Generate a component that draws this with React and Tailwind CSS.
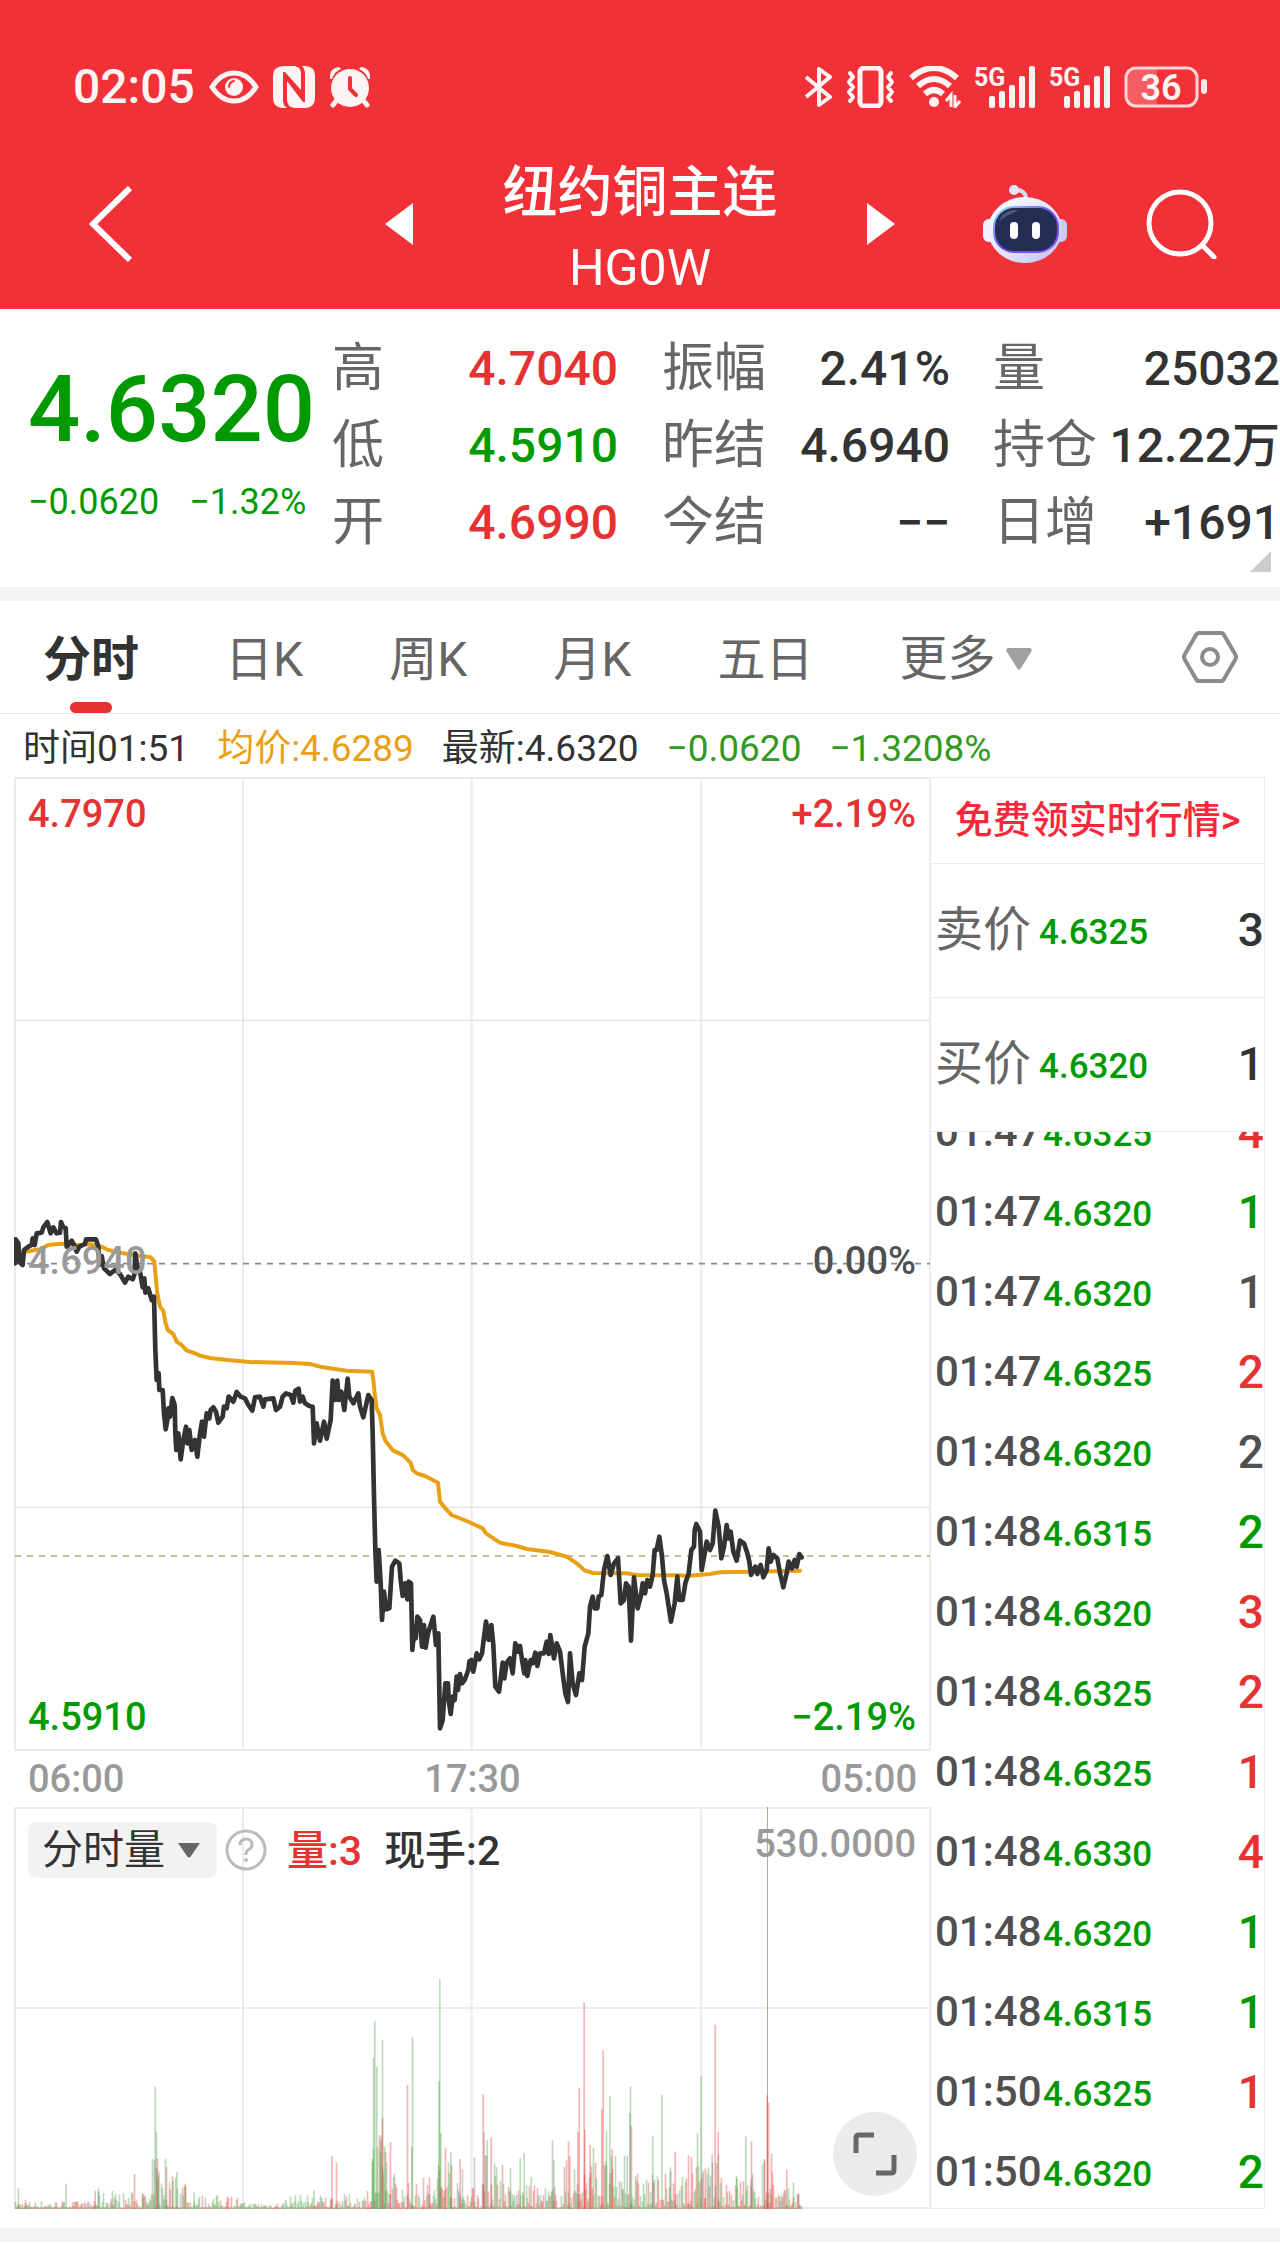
import { useState } from 'react';

const stats = [
  ['高', '4.7040', 'text-[#e63232]', '振幅', '2.41%', '量', '25032'],
  ['低', '4.5910', 'text-[#009a00]', '昨结', '4.6940', '持仓', '12.22万'],
  ['开', '4.6990', 'text-[#e63232]', '今结', '−−', '日增', '+1691'],
];

const tabs = ['分时', '日K', '周K', '月K', '五日'];

const ticks = [
  ['01:47', '4.6325', 4, 'text-[#e63232]'],
  ['01:47', '4.6320', 1, 'text-[#009a00]'],
  ['01:47', '4.6320', 1, 'text-[#505050]'],
  ['01:47', '4.6325', 2, 'text-[#e63232]'],
  ['01:48', '4.6320', 2, 'text-[#505050]'],
  ['01:48', '4.6315', 2, 'text-[#009a00]'],
  ['01:48', '4.6320', 3, 'text-[#e63232]'],
  ['01:48', '4.6325', 2, 'text-[#e63232]'],
  ['01:48', '4.6325', 1, 'text-[#e63232]'],
  ['01:48', '4.6330', 4, 'text-[#e63232]'],
  ['01:48', '4.6320', 1, 'text-[#009a00]'],
  ['01:48', '4.6315', 1, 'text-[#009a00]'],
  ['01:50', '4.6325', 1, 'text-[#e63232]'],
  ['01:50', '4.6320', 2, 'text-[#009a00]'],
];

const pricePoints =
  '45,190 47,118 55,130 58,185 68,195 72,150 85,140 95,135 98,115 104,135 110,100 125,98 130,82 142,66 152,100 160,82 170,100 180,98 183,66 190,82 197,84 200,140 215,122 225,140 230,155 238,140 255,132 258,118 288,118 295,140 298,195 305,168 312,205 330,222 345,210 360,222 375,248 385,230 398,238 403,225 406,160 412,200 420,215 428,262 433,235 436,278 445,265 455,300 462,290 466,450 470,540 476,520 478,570 488,570 492,640 497,688 503,655 505,625 510,650 517,594 524,615 526,700 529,750 535,700 542,778 550,720 558,680 562,730 568,690 575,750 585,720 592,770 600,700 606,665 612,710 620,640 628,655 632,630 640,622 648,635 655,668 668,650 672,620 680,625 686,590 700,605 710,576 722,590 735,595 745,615 757,632 765,592 780,590 790,620 795,598 820,595 828,630 840,620 848,590 858,580 872,585 880,608 886,572 896,566 900,605 908,590 915,610 928,618 938,620 942,730 950,670 960,722 972,665 980,716 992,660 998,542 1005,600 1012,542 1016,600 1024,575 1033,630 1043,536 1048,590 1060,610 1070,590 1075,580 1080,620 1090,652 1105,585 1115,600 ' +
  '1118,700 1122,890 1126,1050 1130,1145 1136,1050 1142,1150 1146,1260 1152,1175 1158,1228 1168,1225 1176,1100 1186,1082 1198,1090 1202,1140 1208,1188 1216,1150 1222,1198 1226,1145 1233,1150 1237,1350 1244,1280 1247,1315 1252,1250 1260,1260 1266,1340 1272,1275 1277,1343 1284,1300 1292,1275 1300,1250 1308,1335 1315,1300 1320,1585 1328,1560 1336,1450 1344,1450 1346,1500 1352,1542 1358,1490 1364,1500 1370,1430 1374,1470 1380,1422 1386,1450 1394,1440 1405,1410 1408,1385 1414,1380 1420,1415 1430,1360 1438,1378 1446,1360 1458,1265 1466,1320 1474,1275 1480,1335 1486,1460 1497,1475 1503,1430 1508,1388 1513,1435 1520,1388 1530,1375 1538,1420 1546,1330 1554,1355 1560,1338 1566,1380 1573,1420 1576,1380 1582,1428 1592,1380 1598,1390 1606,1358 1612,1398 1620,1360 1632,1360 1640,1325 1646,1362 1651,1305 1662,1375 1670,1330 1680,1355 1690,1435 1696,1480 1704,1506 1710,1360 1718,1450 1728,1485 1738,1420 1746,1440 1754,1340 1765,1300 1770,1220 1778,1190 1784,1225 1792,1225 1796,1190 1804,1185 1812,1110 1822,1068 1832,1125 1842,1090 1854,1075 1862,1210 1872,1200 1878,1150 1886,1160 1893,1322 1902,1132 1913,1225 1922,1190 1928,1150 1935,1180 1942,1140 1950,1160 1958,1125 1964,1050 1970,1050 1978,1010 1986,1070 1992,1140 2000,1180 2013,1265 2024,1210 2032,1130 2038,1200 2048,1200 2056,1150 2066,1120 2074,1050 2082,1040 2084,990 2089,972 2100,995 2105,1110 2114,1060 2120,1025 2130,1050 2138,1030 2146,932 2156,980 2164,1075 2172,1040 2180,975 2186,1015 2192,995 2200,1055 2210,1082 2220,1022 2232,1030 2242,1060 2248,1085 2253,1125 2266,1100 2272,1122 2282,1095 2290,1132 2300,1110 2306,1045 2312,1085 2320,1065 2332,1075 2340,1120 2350,1162 2360,1120 2366,1085 2376,1105 2384,1080 2390,1100 2398,1062 2405,1072';

const averagePoints =
  '45,170 60,158 90,153 120,148 145,135 185,131 225,136 270,133 300,138 325,150 370,160 420,168 452,172 463,185 468,240 472,280 480,320 490,332 497,370 503,390 520,402 530,425 545,435 560,452 580,458 600,467 630,474 690,481 750,486 880,489 930,492 960,500 1040,512 1116,515 1120,540 1124,580 1130,625 1140,645 1148,700 1156,722 1166,735 1180,752 1210,766 1222,778 1233,790 1238,810 1250,820 1275,828 1314,848 1320,905 1336,925 1355,945 1400,963 1420,972 1448,985 1458,1000 1480,1015 1500,1028 1550,1038 1580,1047 1650,1056 1700,1070 1730,1090 1755,1112 1780,1119 1880,1120 1910,1125 2040,1126 2060,1128 2130,1122 2160,1117 2405,1112';

const RED = '#e63232';
const GREEN = '#3f9f3f';
const GRAY = '#777777';

// x, height, colour of the tallest bars
const spikes = [
  [55, 62, GREEN], [76, 28, RED], [198, 76, GREEN], [285, 55, RED], [295, 62, GREEN], [337, 54, GREEN],
  [403, 105, RED], [428, 46, GREEN], [465, 367, GREEN], [469, 232, GREEN], [472, 152, RED], [476, 112, GREEN],
  [496, 150, GREEN], [499, 127, RED], [518, 84, GREEN], [530, 112, GREEN], [556, 74, RED], [582, 50, GREEN],
  [682, 38, RED], [942, 56, GREEN], [995, 159, RED], [1009, 140, RED], [1102, 54, RED],
  [1117, 150, GREEN], [1120, 453, GREEN], [1124, 565, GREEN], [1130, 428, GREEN], [1141, 172, GREEN],
  [1147, 508, GREEN], [1147, 272, RED], [1153, 188, GREEN], [1156, 172, RED], [1171, 201, RED],
  [1222, 372, RED], [1237, 516, GREEN], [1235, 186, GREEN], [1270, 94, RED], [1288, 94, RED],
  [1316, 384, GREEN], [1319, 690, GREEN], [1322, 228, GREEN], [1336, 184, RED], [1352, 170, GREEN], [1354, 132, RED],
  [1380, 150, RED], [1387, 119, GRAY], [1423, 155, GRAY],
  [1449, 344, RED], [1452, 230, GRAY], [1461, 206, GREEN], [1473, 214, RED], [1483, 136, GREEN], [1531, 122, GREEN],
  [1560, 152, GREEN], [1572, 168, GREEN], [1593, 96, GREEN], [1657, 206, GRAY], [1661, 148, GREEN],
  [1705, 203, RED], [1709, 158, RED], [1733, 230, RED], [1737, 362, RED], [1752, 620, RED], [1754, 238, RED],
  [1770, 192, RED], [1780, 184, GREEN], [1805, 300, RED], [1809, 476, RED], [1819, 233, GREEN], [1829, 338, GREEN],
  [1836, 179, RED], [1873, 160, GREEN], [1881, 160, GRAY], [1889, 288, GREEN], [1891, 368, GREEN], [1894, 249, RED],
  [1958, 218, GREEN], [1985, 342, GREEN], [2011, 125, GREEN], [2025, 172, RED], [2065, 161, RED], [2074, 156, RED],
  [2092, 227, GREEN], [2103, 398, GREEN], [2116, 122, RED], [2136, 164, GRAY], [2145, 553, RED], [2154, 232, RED],
  [2155, 164, GREEN], [2210, 92, GREEN], [2237, 218, GREEN], [2254, 203, RED], [2293, 150, RED],
  [2301, 341, RED], [2305, 320, RED], [2314, 166, RED], [2360, 118, RED], [2380, 80, GREEN], [2395, 44, RED],
];

// upper limit of the ordinary bars up to each x
const ranges = [
  [280, 22], [455, 50], [480, 150], [560, 110], [720, 40], [850, 18], [1112, 42], [1160, 230], [1200, 120],
  [1310, 80], [1360, 180], [1445, 80], [1510, 170], [1630, 70], [1690, 70], [1780, 150], [1860, 160],
  [2080, 110], [2180, 140], [2280, 110], [2320, 170], [2405, 60],
];

const makeBars = () => {
  const bars = [];
  let seed = 7;
  const random = () => {
    seed = (seed * 16807) % 2147483647;
    return seed / 2147483647;
  };
  for (let x = 46; x < 2405; x += 3) {
    const limit = ranges.find(([end]) => x <= end)[1];
    const pick = random();
    const color = pick < 0.45 ? RED : pick < 0.88 ? GREEN : GRAY;
    bars.push([x, 3 + limit * Math.pow(random(), 1.8), color]);
  }
  return bars;
};

const volumeBars = [...makeBars(), ...spikes];

const SignalIcon = () => (
  <svg className="w-[62px] h-[42px] overflow-visible" viewBox="0 0 62 42" fill="#fff4f4">
    <text x="0" y="20" fontSize="25" fontWeight="700" fontFamily="Roboto, sans-serif">5G</text>
    <rect x="15" y="30" width="6" height="12" rx="2" />
    <rect x="25" y="25" width="6" height="17" rx="2" />
    <rect x="35" y="19" width="6" height="23" rx="2" />
    <rect x="45" y="10" width="6" height="32" rx="2" />
    <rect x="55" y="0" width="6" height="42" rx="2" />
  </svg>
);

const StatusBar = () => (
  <div className="flex items-center justify-between pl-[73px] pr-[72px] h-[60px] text-[#fff4f4]">
    <div className="flex items-center gap-[14px]">
      <span className="text-[48px] leading-[60px] font-medium">02:05</span>
      <svg className="w-[50px] h-[34px]" viewBox="0 0 50 34" fill="none" stroke="currentColor" strokeWidth="5">
        <path d="M3 17Q12 3 25 3T47 17Q38 31 25 31T3 17Z" />
        <circle cx="25" cy="17" r="9" fill="currentColor" stroke="none" />
        <path d="M20 17Q20 12 25 11" stroke="#f23038" strokeWidth="2" strokeLinecap="round" />
      </svg>
      <svg className="w-[42px] h-[42px]" viewBox="0 0 42 42" fill="currentColor">
        <path d="M10 0H22Q28 1 28 8V24L12 6H10V34Q10 40 14 42H9Q0 41 0 32V9Q0 1 10 0Z" />
        <path d="M29 0H33Q42 1 42 9V32Q42 41 33 42H22Q14 41 14 34V15L30 36H32V8Q32 3 29 0Z" />
      </svg>
      <svg className="w-[42px] h-[42px]" viewBox="0 0 42 42" fill="currentColor">
        <circle cx="21" cy="22" r="19" />
        <path d="M1 13Q0 2 10 1L12 3Q5 6 3 13ZM41 13Q42 2 32 1L30 3Q37 6 39 13Z" />
        <path d="M8 34L4 39M34 34L38 39" stroke="currentColor" strokeWidth="5" strokeLinecap="round" />
        <path d="M21 12V23L27 29" fill="none" stroke="#f23038" strokeWidth="4" strokeLinecap="round" />
      </svg>
    </div>
    <div className="flex items-center gap-[13px]">
      <svg className="w-[28px] h-[42px]" viewBox="0 0 28 42" fill="none" stroke="currentColor" strokeWidth="4" strokeLinejoin="round">
        <path d="M1 11L25 31L14 39V3L25 11L1 31" />
      </svg>
      <svg className="w-[50px] h-[42px]" viewBox="0 0 50 42" fill="none" stroke="currentColor" strokeWidth="4" strokeLinejoin="round" strokeLinecap="round">
        <rect x="14" y="2" width="21" height="38" rx="4" strokeWidth="5" />
        <path d="M4 7L7 11L3 16L7 21L3 26L7 31L4 35M45 7L42 11L46 16L42 21L46 26L42 31L45 35" />
      </svg>
      <svg className="w-[52px] h-[42px]" viewBox="0 0 52 42" fill="none" stroke="currentColor" strokeWidth="6">
        <path d="M2 12Q25 -8 48 12M9 20Q25 6 41 20M16 28Q25 20 34 28" />
        <circle cx="25" cy="36" r="5" fill="currentColor" stroke="none" />
        <path d="M42 41V29L37 35M46 29V41L51 35" strokeWidth="3" />
      </svg>
      <SignalIcon />
      <SignalIcon />
      <svg className="w-[84px] h-[42px]" viewBox="0 0 84 42">
        <path d="M10 2H33V40H10Q2 40 2 32V10Q2 2 10 2Z" fill="#fff" fillOpacity="0.22" />
        <rect x="2" y="2" width="71" height="38" rx="10" fill="none" stroke="#ffd6d8" strokeWidth="3" />
        <rect x="77" y="13" width="6" height="15" rx="3" fill="#ffe8e8" />
        <text x="37" y="34" fontSize="36" fontWeight="600" textAnchor="middle" fontFamily="Roboto, sans-serif" fill="#fff4f4">36</text>
      </svg>
    </div>
  </div>
);

const RobotIcon = () => (
  <svg className="w-[84px] h-[78px]" viewBox="0 0 84 78">
    <defs>
      <linearGradient id="head" x1="0" y1="0" x2="1" y2="1">
        <stop offset="0" stopColor="#ffffff" />
        <stop offset="0.55" stopColor="#e2e3fb" />
        <stop offset="1" stopColor="#b9bdf0" />
      </linearGradient>
      <linearGradient id="rim" x1="0" y1="0" x2="1" y2="1">
        <stop offset="0" stopColor="#8fe6ff" />
        <stop offset="0.5" stopColor="#6d4df0" />
        <stop offset="1" stopColor="#8a4df5" />
      </linearGradient>
    </defs>
    <path d="M31 5Q42 4 43 13" fill="none" stroke="#dcdcf6" strokeWidth="4" />
    <circle cx="31" cy="5" r="5" fill="#e6e6fb" />
    <rect x="0" y="34" width="14" height="23" rx="6" fill="#f0f0ff" />
    <rect x="70" y="34" width="14" height="23" rx="6" fill="#c9cbf5" />
    <ellipse cx="42" cy="45" rx="37" ry="33" fill="url(#head)" />
    <rect x="11" y="22" width="64" height="45" rx="20" fill="#242e55" stroke="url(#rim)" strokeWidth="2" />
    <path d="M16 36Q20 24 36 25Q26 29 16 36Z" fill="#4c5778" />
    <rect x="27" y="37" width="8" height="17" rx="4" fill="#fff" />
    <rect x="49" y="37" width="8" height="17" rx="4" fill="#fff" />
  </svg>
);

const NavBar = () => (
  <div className="grid grid-cols-[1fr_510px_1fr] items-center content-center h-[139px] text-white">
    <div className="flex pl-[89px]">
      <button aria-label="返回">
        <svg className="w-[44px] h-[76px]" viewBox="0 0 44 76" fill="none" stroke="currentColor" strokeWidth="6">
          <path d="M41 2L4 38L41 74" />
        </svg>
      </button>
    </div>
    <div className="flex items-center justify-between">
      <button aria-label="上一个">
        <svg className="w-[28px] h-[42px]" viewBox="0 0 28 42" fill="currentColor">
          <path d="M28 0V42L0 21Z" />
        </svg>
      </button>
      <h1 className="flex flex-col items-center pt-[12px]">
        <span className="text-[55px] leading-[78px] font-medium">纽约铜主连</span>
        <span className="text-[50px] leading-[75px]">HG0W</span>
      </h1>
      <button aria-label="下一个">
        <svg className="w-[28px] h-[42px]" viewBox="0 0 28 42" fill="currentColor">
          <path d="M0 0V42L28 21Z" />
        </svg>
      </button>
    </div>
    <div className="flex items-center justify-end gap-[79px] pr-[62px]">
      <button aria-label="智能助手">
        <RobotIcon />
      </button>
      <button aria-label="搜索">
        <svg className="w-[72px] h-[70px]" viewBox="0 0 72 70" fill="none" stroke="currentColor" strokeWidth="5">
          <circle cx="34" cy="34" r="31" />
          <path d="M57 57L68 68" strokeLinecap="round" />
        </svg>
      </button>
    </div>
  </div>
);

const Quote = () => (
  <section className="relative flex h-[278px] pt-[21px]">
    <div className="w-[332px] pl-[28px] shrink-0">
      <p className="text-[92px] leading-[112px] pt-[24px] font-medium text-[#009a00]">4.6320</p>
      <p className="flex gap-[30px] text-[36px] leading-[44px] pt-[14px] text-[#009a00]">
        <span>−0.0620</span>
        <span>−1.32%</span>
      </p>
    </div>
    <dl className="flex-1 grid grid-cols-[286px_44px_288px_43px_1fr] content-start text-[48px] leading-[77px] text-[#333333]">
      {stats.map(([a, high, color, b, mid, c, last]) => (
        <div key={a} className="contents">
          <div className="flex justify-between h-[77px]">
            <dt className="text-[52px] text-[#666666]">{a}</dt>
            <dd className={`font-medium ${color}`}>{high}</dd>
          </div>
          <span />
          <div className="flex justify-between h-[77px]">
            <dt className="text-[52px] text-[#666666]">{b}</dt>
            <dd className="font-medium">{mid}</dd>
          </div>
          <span />
          <div className="flex justify-between h-[77px]">
            <dt className="text-[52px] text-[#666666]">{c}</dt>
            <dd className="font-medium whitespace-nowrap">{last}</dd>
          </div>
        </div>
      ))}
    </dl>
    <svg className="absolute right-[9px] bottom-[15px] w-[21px] h-[21px]" viewBox="0 0 21 21" fill="#cccccc">
      <path d="M21 0V21H0Z" />
    </svg>
  </section>
);

const TabBar = ({ active, onChange }) => (
  <nav className="flex items-stretch h-[113px] pl-[43px] pr-[42px] border-b border-[#e6e6e6] text-[48px] text-[#666666]">
    <div className="flex gap-[86px]">
      {tabs.map((tab) => (
        <button
          key={tab}
          onClick={() => onChange(tab)}
          className={`flex flex-col items-center justify-between ${active === tab ? 'font-bold text-[#333333]' : ''}`}
        >
          <span className="leading-[70px] pt-[24px]">{tab}</span>
          {active === tab && <span className="w-[42px] h-[11px] rounded-full bg-[#e63232]" />}
        </button>
      ))}
      <button className="flex items-center gap-[10px] pt-[3px]">
        更多
        <svg className="w-[28px] h-[22px]" viewBox="0 0 28 22" fill="#a0a0a0">
          <path d="M3 0H25Q28 1 26 4L16 20Q14 23 12 20L2 4Q0 1 3 0Z" />
        </svg>
      </button>
    </div>
    <button aria-label="设置" className="ml-auto">
      <svg className="w-[56px] h-[54px]" viewBox="0 0 56 54" fill="none" stroke="#8c8c8c" strokeWidth="4" strokeLinejoin="round">
        <path d="M17 3H39Q41 3 42 5L53 24Q55 27 53 30L42 49Q41 51 39 51H17Q15 51 14 49L3 30Q1 27 3 24L14 5Q15 3 17 3Z" />
        <circle cx="28" cy="27" r="8" />
      </svg>
    </button>
  </nav>
);

const PriceChart = () => (
  <div className="relative text-[38px] leading-[46px] font-medium">
    <svg className="block w-full h-auto" viewBox="42 -1269 2751 2922" fill="none">
      <path d="M45 -1266H2790V1650H45ZM729 -1266V1650M1415 -1266V1650M2104 -1266V1650" stroke="#ebebeb" strokeWidth="6" />
      <path d="M45 -539H2790M45 922H2790" stroke="#dcdcdc" strokeWidth="3" />
      <path d="M45 191H2790" stroke="#8c8c8c" strokeWidth="5" strokeDasharray="18 18" />
      <path d="M45 1068H2790" stroke="#c0a26c" strokeWidth="5" strokeDasharray="18 18" />
      <polyline points={averagePoints} stroke="#eaa015" strokeWidth="12" strokeLinejoin="round" />
      <polyline points={pricePoints} stroke="#333333" strokeWidth="14" strokeLinejoin="round" strokeLinecap="round" />
    </svg>
    <span className="absolute left-[14px] top-[14px] text-[#e63232]">4.7970</span>
    <span className="absolute right-[15px] top-[14px] text-[#e63232]">+2.19%</span>
    <span className="absolute left-[14px] top-[461px] text-[#999999]">4.6940</span>
    <span className="absolute right-[15px] top-[461px] text-[#505050]">0.00%</span>
    <span className="absolute left-[14px] bottom-[11px] text-[#009a00]">4.5910</span>
    <span className="absolute right-[15px] bottom-[11px] text-[#009a00]">−2.19%</span>
  </div>
);

const VolumeChart = () => (
  <div className="relative">
    <svg className="block w-full h-auto" viewBox="42 -279 2751 1206" fill="none">
      <path d="M45 -276H2790V924H45ZM729 -276V924M1415 -276V924M2104 -276V924M45 324H2790" stroke="#ebebeb" strokeWidth="6" />
      <rect x="2301" y="-279" width="3" height="1206" fill="#cf7676" fillOpacity="0.75" />
      {volumeBars.map(([x, height, color], idx) => (
        <rect key={idx} x={x - 2} y={927 - height} width="5" height={height} fill={color} fillOpacity="0.36" />
      ))}
    </svg>
    <div className="absolute left-[14px] top-[14px] flex items-center text-[41px] leading-[56px] text-[#333333]">
      <label className="relative flex items-center">
        <select aria-label="指标" className="appearance-none w-[189px] h-[56px] pl-[14px] rounded-[8px] bg-[#f2f2f2]">
          <option>分时量</option>
        </select>
        <svg className="absolute right-[17px] w-[22px] h-[15px] pointer-events-none" viewBox="0 0 22 15" fill="#666666">
          <path d="M0 0H22L13 13Q11 16 9 13Z" />
        </svg>
      </label>
      <button aria-label="说明" className="ml-[8px] mr-[20px]">
        <svg className="w-[42px] h-[42px]" viewBox="0 0 42 42" fill="none" stroke="#bbbbbb" strokeWidth="3">
          <circle cx="21" cy="21" r="19" />
          <path d="M15 16Q15 10 21 10T27 16Q27 19 23 21Q21 22 21 26" />
          <circle cx="21" cy="31" r="2" fill="#bbbbbb" stroke="none" />
        </svg>
      </button>
      <span className="mr-[22px] pt-[2px] font-medium text-[#e63232]">量:3</span>
      <span className="pt-[2px] font-medium">现手:2</span>
    </div>
    <span className="absolute right-[15px] top-[14px] text-[38px] leading-[46px] font-medium text-[#999999]">530.0000</span>
    <button aria-label="全屏" className="absolute right-[14px] bottom-[13px] w-[84px] h-[84px] rounded-full bg-[#ebebeb]">
      <svg className="w-full h-full" viewBox="0 0 84 84" fill="none" stroke="#666666" strokeWidth="5">
        <path d="M23 41V26Q23 23 26 23H41M43 61H58Q61 61 61 58V43" />
      </svg>
    </button>
  </div>
);

const TradePanel = () => (
  <aside className="w-[334px] shrink-0 flex flex-col border-t border-r border-b border-[#ebebeb]">
    <a href="#quotes" className="h-[86px] flex items-center justify-center border-b border-[#ebebeb] text-[38px] font-medium text-[#f8283a]">
      免费领实时行情&gt;
    </a>
    {[['卖价', '4.6325', 3], ['买价', '4.6320', 1]].map(([label, price, count]) => (
      <div key={label} className="h-[134px] flex items-center pl-[4px] pb-[2px] border-b border-[#ebebeb] leading-[60px]">
        <span className="text-[48px] text-[#666666]">{label}</span>
        <span className="ml-[8px] pt-[6px] text-[35px] font-medium text-[#009a00]">{price}</span>
        <span className="ml-auto text-[46px] font-medium text-[#333333]">{count}</span>
      </div>
    ))}
    <div className="basis-0 grow min-h-0 overflow-hidden">
      <table className="w-full -mt-[40px] font-medium">
        <tbody>
          {ticks.map(([time, price, count, color], idx) => (
            <tr key={idx} className="h-[80px] leading-[60px]">
              <td className="w-[112px] p-0 pl-[4px] text-[42px] text-[#505050]">{time}</td>
              <td className="p-0 pt-[6px] text-[35px] text-[#009a00]">{price}</td>
              <td className={`p-0 text-right text-[46px] ${color}`}>{count}</td>
            </tr>
          ))}
        </tbody>
      </table>
    </div>
  </aside>
);

const App = () => {
  const [active, setActive] = useState('分时');

  return (
    <div className="min-h-screen bg-white overflow-x-hidden font-['Roboto','Noto_Sans_CJK_SC',sans-serif]">
      <header className="bg-[#f23038] pt-[57px] pb-[16px]">
        <StatusBar />
        <div className="h-[37px]" />
        <NavBar />
      </header>
      <Quote />
      <div className="h-[14px] bg-[#f4f4f4]" />
      <TabBar active={active} onChange={setActive} />

      {/* 行情摘要 */}
      <div className="flex items-center gap-[28px] h-[63px] pl-[23px] pt-[6px] text-[37px] text-[#333333]">
        <span>时间01:51</span>
        <span className="text-[#eaa015]">均价:4.6289</span>
        <span>最新:4.6320</span>
        <span className="text-[#339922]">−0.0620</span>
        <span className="text-[#339922]">−1.3208%</span>
      </div>

      <main className="flex pl-[14px] pr-[15px]">
        <div className="flex-1 min-w-0">
          <PriceChart />
          <div className="grid grid-cols-3 px-[14px] text-[38px] leading-[56px] font-medium text-[#999999]">
            <span>06:00</span>
            <span className="text-center">17:30</span>
            <span className="text-right">05:00</span>
          </div>
          <VolumeChart />
        </div>
        <TradePanel />
      </main>
      <div className="h-[14px] mt-[19px] mb-[14px] bg-[#f4f4f4]" />
    </div>
  );
};

export default App;
